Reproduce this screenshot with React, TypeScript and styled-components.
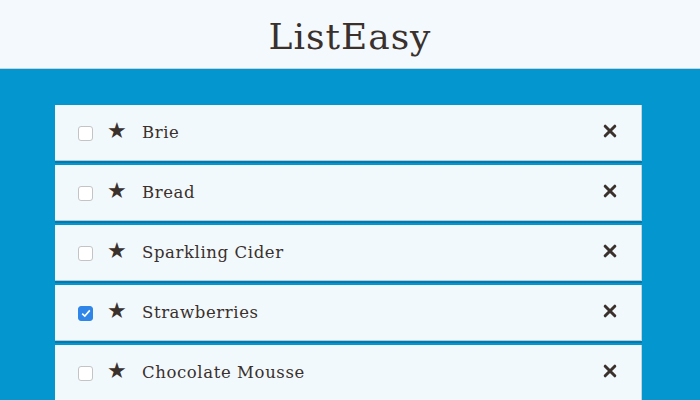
import React from "react";
import styled, { createGlobalStyle } from "styled-components";

const Global = createGlobalStyle`
  html, body { margin: 0; padding: 0; }
  body { background: #0396cf; font-family: "DejaVu Serif", "Liberation Serif", serif; overflow: hidden; }
`;

const Page = styled.div`
  width: 700px;
  height: 400px;
  display: flex;
  flex-direction: column;
  background: #0396cf;
  overflow: hidden;
`;

const Header = styled.header`
  flex-shrink: 0;
  height: 68px;
  background: #f3f9fc;
  border-bottom: 1px solid #c9d3d8;
  display: flex;
  align-items: center;
  justify-content: center;
`;

const Title = styled.h1`
  margin: 0;
  font-family: "DejaVu Serif", serif;
  font-weight: normal;
  font-size: 36px;
  letter-spacing: 1px;
  color: #3a302c;
  padding-top: 4px;
`;

const List = styled.ul`
  flex-shrink: 0;
  list-style: none;
  margin: 36px 0 0 55px;
  padding: 0;
  width: 587px;
  display: flex;
  flex-direction: column;
  gap: 4px;
`;

const Row = styled.li`
  flex-shrink: 0;
  height: 55px;
  background: #f2f9fd;
  border-right: 1px solid #c3d4de;
  border-bottom: 1px solid #b7cbd6;
  box-sizing: content-box;
  display: flex;
  align-items: center;
  padding: 0 23px 0 23px;
  box-shadow: 0 2px 0 rgba(0, 60, 100, 0.3);
`;

const Box = styled.span<{ $checked?: boolean }>`
  width: 15px;
  height: 15px;
  box-sizing: border-box;
  border-radius: 3px;
  border: 1px solid ${(p) => (p.$checked ? "#2f86e8" : "#c4c4c4")};
  background: ${(p) => (p.$checked ? "#2f86e8" : "#ffffff")};
  display: flex;
  align-items: center;
  justify-content: center;
  margin-right: 14px;
  margin-top: 2px;
`;

const Star = styled.span`
  font-size: 22px;
  color: #3a302c;
  width: 20px;
  margin-right: 15px;
  line-height: 1;
  margin-top: -4px;
`;

const Label = styled.span`
  flex: 1;
  font-family: "DejaVu Serif", serif;
  font-size: 16.5px;
  color: #3a302c;
  letter-spacing: 0.6px;
`;

const Remove = styled.span`
  width: 16px;
  height: 16px;
  display: flex;
  align-items: center;
  justify-content: center;
  margin-top: -4px;
`;

const items = [
  { name: "Brie", checked: false },
  { name: "Bread", checked: false },
  { name: "Sparkling Cider", checked: false },
  { name: "Strawberries", checked: true },
  { name: "Chocolate Mousse", checked: false },
];

export default function App() {
  return (
    <>
      <Global />
      <Page>
        <Header>
          <Title>ListEasy</Title>
        </Header>
        <List>
          {items.map((it) => (
            <Row key={it.name}>
              <Box $checked={it.checked}>
                {it.checked && (
                  <svg width="10" height="9" viewBox="0 0 10 9">
                    <path d="M1.2 4.6 L3.8 7 L8.8 1.4" fill="none" stroke="#fff" strokeWidth="1.6" />
                  </svg>
                )}
              </Box>
              <Star>★</Star>
              <Label>{it.name}</Label>
              <Remove>
                <svg width="14" height="14" viewBox="0 0 14 14">
                  <path d="M2.2 2.2 L11.8 11.8 M11.8 2.2 L2.2 11.8" stroke="#3a302c" strokeWidth="3" strokeLinecap="round" />
                </svg>
              </Remove>
            </Row>
          ))}
        </List>
      </Page>
    </>
  );
}
